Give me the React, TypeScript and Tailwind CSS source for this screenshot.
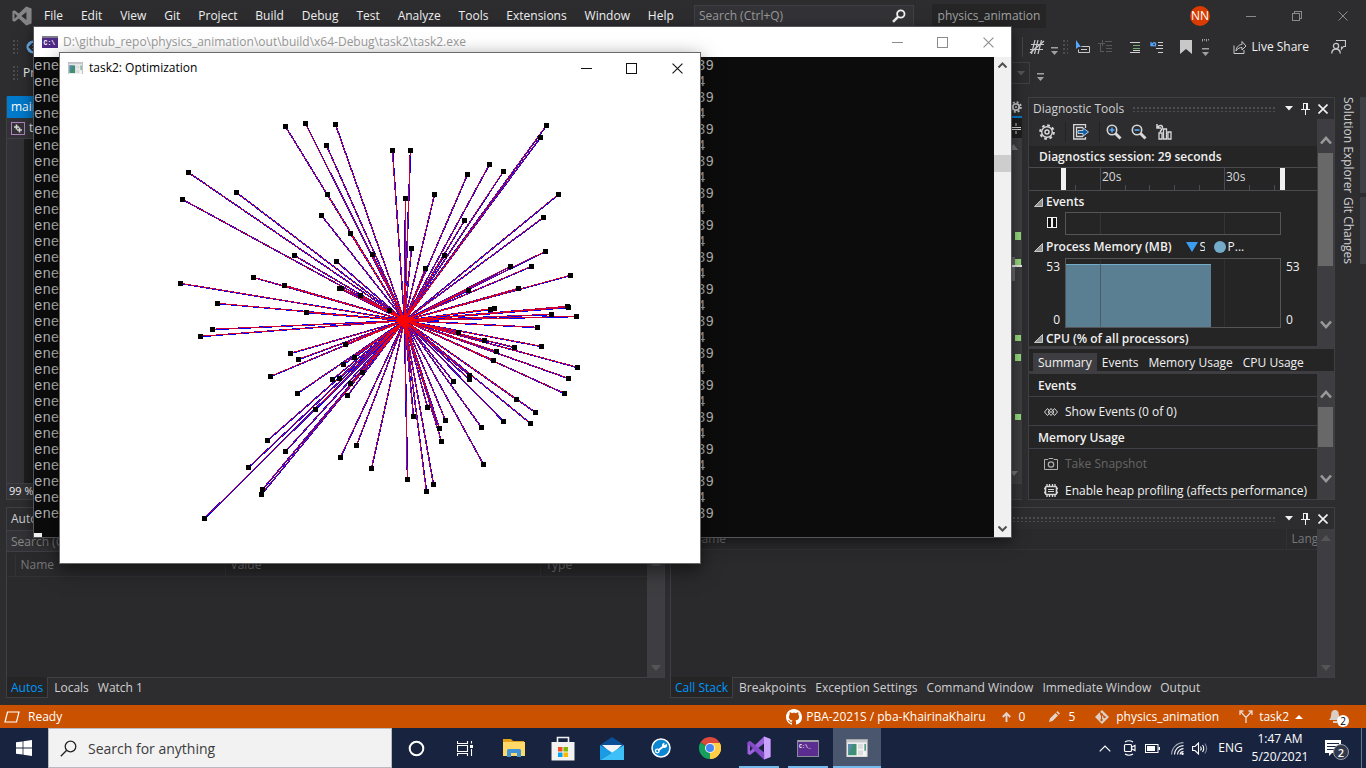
import React from "react";

const UI = "font-['Open_Sans','Noto_Sans',sans-serif]";

/* ---------- small shared pieces ---------- */

function Grip({ className }: { className: string }) {
  return (
    <div
      aria-hidden="true"
      className={`bg-[radial-gradient(#4c4c51_1px,transparent_1px)] bg-[length:4px_4px] ${className}`}
    />
  );
}

function VsLogo({ size, mono }: { size: number; mono?: boolean }) {
  return (
    <svg width={size} height={size} viewBox="0 0 24 24" aria-hidden="true">
      <path
        fillRule="evenodd"
        fill={mono ? "#858587" : "#9a63dd"}
        d="M17 0.5 L23.5 3 V21 L17 23.5 L8.2 15 L3 19 L0.5 17.8 V6.2 L3 5 L8.2 9 Z M17.3 7.2 L11.2 12 L17.3 16.8 Z M3 8.8 V15.2 L6.2 12 Z"
      />
      {!mono && <path fill="#c9a0fb" d="M17 0.5 L23.5 3 V21 L17 23.5 Z" />}
      {!mono && <path fill="#7a40bd" d="M3 5 L17.3 16.8 V23.4 L0.5 8 V6.2 Z" opacity="0.7" />}
    </svg>
  );
}

function Caret({ color = "#f1f1f1" }: { color?: string }) {
  return (
    <svg width="8" height="5" viewBox="0 0 8 5" aria-hidden="true">
      <path d="M0 0H8L4 4.5Z" fill={color} />
    </svg>
  );
}

function Overflow() {
  return (
    <svg width="7" height="8" viewBox="0 0 7 8" aria-hidden="true">
      <path d="M0 0H7V1.5H0Z M0 4H7L3.5 8Z" fill="#a0a0a3" />
    </svg>
  );
}

function Pin() {
  return (
    <svg width="9" height="12" viewBox="0 0 9 12" aria-hidden="true" shapeRendering="crispEdges">
      <path d="M2 0H7V6H9V7H5V12H4V7H0V6H2Z M3 1V6H5V1Z" fill="#f1f1f1" fillRule="evenodd" />
    </svg>
  );
}

function Cross({ size = 10, color = "#f1f1f1", width = 1.6 }: { size?: number; color?: string; width?: number }) {
  return (
    <svg width={size} height={size} viewBox="0 0 10 10" aria-hidden="true">
      <path d="M0.5 0.5L9.5 9.5M9.5 0.5L0.5 9.5" stroke={color} strokeWidth={width} fill="none" />
    </svg>
  );
}

function PanelControls() {
  return (
    <div className="flex items-center gap-2 pr-[6px]">
      <button aria-label="Window position"><Caret /></button>
      <button aria-label="Auto hide"><Pin /></button>
      <button aria-label="Close panel"><Cross /></button>
    </div>
  );
}

function Chevron({ up }: { up?: boolean }) {
  return (
    <svg width="12" height="9" viewBox="0 0 12 9" aria-hidden="true">
      <path d={up ? "M1 7.5L6 2L11 7.5" : "M1 1.5L6 7L11 1.5"} fill="none" stroke="#999999" strokeWidth="2.6" />
    </svg>
  );
}

function Triangle({ up }: { up?: boolean }) {
  return (
    <svg width="10" height="6" viewBox="0 0 10 6" aria-hidden="true">
      <path d={up ? "M0 6L5 0L10 6Z" : "M0 0L5 6L10 0Z"} fill="#555558" />
    </svg>
  );
}

function WindowButtons({ color }: { color: string }) {
  return (
    <div className="flex h-full">
      <button aria-label="Minimize" className="grid w-[46px] place-items-center">
        <svg width="11" height="11" viewBox="0 0 11 11" shapeRendering="crispEdges"><path d="M0 5.5H11" stroke={color} /></svg>
      </button>
      <button aria-label="Maximize" className="grid w-[45px] place-items-center">
        <svg width="11" height="11" viewBox="0 0 11 11" shapeRendering="crispEdges"><rect x="0.5" y="0.5" width="10" height="10" fill="none" stroke={color} /></svg>
      </button>
      <button aria-label="Close" className="grid w-[46px] place-items-center">
        <Cross size={11} color={color} width={1} />
      </button>
    </div>
  );
}

/* ---------- IDE top bars ---------- */

const MENUS = ["File", "Edit", "View", "Git", "Project", "Build", "Debug", "Test", "Analyze", "Tools", "Extensions", "Window", "Help"];

function MenuBar() {
  return (
    <header className="flex h-8 shrink-0 items-center pl-3">
      <VsLogo size={20} mono />
      <nav className="ml-3 flex w-[630px] shrink-0 justify-between text-[12px] text-[#f1f1f1]">
        {MENUS.map((m) => (
          <button key={m}>{m}</button>
        ))}
      </nav>
      <label className="ml-5 flex h-[22px] w-[220px] shrink-0 items-center border border-[#3f3f46] bg-[#333337] pl-1 pr-[7px]">
        <span className="sr-only">Search</span>
        <input placeholder="Search (Ctrl+Q)" className="min-w-0 flex-1 bg-transparent text-[12px] text-[#f1f1f1] outline-none placeholder:text-[#999999]" />
        <svg width="14" height="14" viewBox="0 0 14 14" aria-hidden="true">
          <circle cx="8.8" cy="5" r="3.7" fill="none" stroke="#f1f1f1" strokeWidth="1.8" />
          <path d="M6 7.8L1 12.8" stroke="#f1f1f1" strokeWidth="2.4" />
        </svg>
      </label>
      <div className="ml-[18px] flex h-6 w-[114px] items-center justify-center bg-[#252526] text-[12px] text-[#a0a0a0]">physics_animation</div>
      <div className="ml-auto flex items-center">
        <span className="grid size-5 place-items-center rounded-full bg-[#da3b01] text-[12px] text-white">NN</span>
        <div className="ml-[18px] flex h-8">
          <button aria-label="Minimize IDE" className="grid w-[46px] place-items-center">
            <svg width="10" height="10" viewBox="0 0 10 10" shapeRendering="crispEdges"><path d="M0 5.5H10" stroke="#8a8a8c" /></svg>
          </button>
          <button aria-label="Restore IDE" className="grid w-[46px] place-items-center">
            <svg width="10" height="10" viewBox="0 0 10 10" shapeRendering="crispEdges"><path d="M0.5 2.5H7.5V9.5H0.5ZM2.5 2.5V0.5H9.5V7.5H7.5" fill="none" stroke="#8a8a8c" /></svg>
          </button>
          <button aria-label="Close IDE" className="grid w-[46px] place-items-center"><Cross size={10} color="#8a8a8c" width={1} /></button>
        </div>
      </div>
    </header>
  );
}

function Divider() {
  return <span className="h-5 w-px bg-[#46464a]" />;
}

function Toolbars() {
  return (
    <div className="shrink-0 text-[12px] text-[#f1f1f1]">
      <div className="flex h-7 items-center pl-3 pt-[2px]">
        <Grip className="h-4 w-[6px]" />
        <button aria-label="Navigate backward" className="ml-2">
          <svg width="14" height="14" viewBox="0 0 14 14"><circle cx="7" cy="7" r="6.5" fill="#6cb2ee" /><path d="M11 7H4M7 3.5L3.5 7L7 10.5" stroke="#2d2d30" strokeWidth="1.8" fill="none" /></svg>
        </button>
        <div className="ml-auto flex items-center pr-5">
          <Divider />
          <button aria-label="Uncomment" className="ml-[6px]">
            <svg width="16" height="14" viewBox="0 0 16 14"><path d="M6 0L2.500 14M9 0L5.500 14M12.500 0L9 14M2 4.500H15M1 9.500H14" stroke="#c8c8c8" strokeWidth="1.200" fill="none" /><path d="M1 13L15 1" stroke="#c8c8c8" strokeWidth="1.400" /></svg>
          </button>
          <span className="ml-[6px] mt-2"><Overflow /></span>
          <Grip className="ml-1 h-4 w-[6px]" />
          <button aria-label="Select block" className="ml-[7px]">
            <svg width="15" height="15" viewBox="0 0 15 15"><path d="M1 0V9L3.5 7L6 7Z" fill="#55aaff" /><path d="M6.5 6.5H14.5V12.5H3.5V9.5M6 9.5H12" fill="none" stroke="#c8c8c8" /></svg>
          </button>
          <button aria-label="Outline" className="ml-2">
            <svg width="14" height="14" viewBox="0 0 14 14" shapeRendering="crispEdges"><path d="M0 3.5H7M2.5 3V11.5H6M7 1.5H14M8 5.5H14M8 8.5H14M8 11.5H14M4 0V6" stroke="#58585c" fill="none" strokeWidth="1" /></svg>
          </button>
          <span className="ml-2"><Divider /></span>
          <button aria-label="Comment lines" className="ml-[9px]">
            <svg width="12" height="11" viewBox="0 0 12 11" shapeRendering="crispEdges"><path d="M1 0.5H11M1 10.5H11" stroke="#d0d0d0" /><path d="M4 3.5H11M4 6.5H11" stroke="#6fae6f" /><path d="M4 8.5H11" stroke="#d0d0d0" /></svg>
          </button>
          <button aria-label="Undo comment" className="ml-[9px]">
            <svg width="14" height="13" viewBox="0 0 14 13"><path d="M1 1V4.5H4.5M1.5 4C4 0 7 2 5 5.5" stroke="#55aaff" strokeWidth="1.3" fill="none" /><path d="M8 1.5H13M8 4.5H13M6 7.5H13M8 11.5H13" stroke="#d0d0d0" /></svg>
          </button>
          <span className="ml-2"><Divider /></span>
          <button aria-label="Bookmark" className="ml-2">
            <svg width="12" height="14" viewBox="0 0 12 14"><path d="M0 0H12V14L6 9L0 14Z" fill="#c8c8c8" /></svg>
          </button>
          <svg className="ml-[10px]" width="7" height="18" viewBox="0 0 7 18" aria-hidden="true">
            <path d="M0.500 1V3.500M2.500 1V2.500M4.500 1V3.500M6.500 1V2.500" stroke="#a0a0a3" />
            <path d="M0 10H7V11.500H0Z M0 14H7L3.500 18Z" fill="#a0a0a3" />
          </svg>
          <button className="ml-6 flex items-center gap-[5px]">
            <svg width="14" height="14" viewBox="0 0 14 14"><path d="M1 5.5V13.5H11V10" stroke="#c8c8c8" fill="none" /><path d="M3 11C3.500 6 7 4.500 9 4.500V1.500L13 6L9 10V7.500C7 7.500 5 8 3 11Z" stroke="#c8c8c8" fill="none" /></svg>
            Live Share
          </button>
          <button aria-label="Send feedback" className="ml-[22px]">
            <svg width="15" height="14" viewBox="0 0 15 14"><path d="M5 0.500H14.500V6.500H12.500L10.500 9V6.500" fill="none" stroke="#c8c8c8" strokeWidth="1.2" /><circle cx="5" cy="6" r="2.600" fill="none" stroke="#c8c8c8" strokeWidth="1.300" /><path d="M0.700 13.500C1 10 3 9 5 9C7 9 9 10 9.300 13.500" fill="none" stroke="#c8c8c8" strokeWidth="1.300" /></svg>
          </button>
        </div>
      </div>
      <div className="flex h-[26px] items-center pl-3">
        <Grip className="h-4 w-[6px]" />
        <span className="ml-[5px]">Process:</span>
        <div className="ml-auto flex items-center gap-[7px] pr-[322px]">
          <button aria-label="Stack frame" className="flex h-[22px] w-[180px] items-center justify-end border border-[#3f3f46] pr-1"><Caret color="#55555a" /></button>
          <span className="mt-2"><Overflow /></span>
        </div>
      </div>
    </div>
  );
}

/* ---------- editor strip behind the windows ---------- */

function Editor() {
  return (
    <section className="flex min-w-0 flex-1 flex-col border-l border-[#3f3f46] text-[12px] text-[#f1f1f1]">
      <div className="flex h-[21px] shrink-0 items-center justify-between border-b-2 border-[#007acc]">
        <button className="h-[21px] bg-[#007acc] px-1 text-white">main.cpp</button>
        <svg width="12" height="12" viewBox="0 0 12 12" aria-hidden="true">
          <circle cx="6" cy="6" r="3.200" fill="none" stroke="#c8c8c8" strokeWidth="1.800" />
          <circle cx="6" cy="6" r="5" fill="none" stroke="#c8c8c8" strokeWidth="1.600" strokeDasharray="2 1.927" />
          <circle cx="6" cy="6" r="1" fill="#c8c8c8" />
        </svg>
      </div>
      <div className="flex h-[21px] shrink-0 items-center justify-between border-b border-[#3f3f46] bg-[#333337] pl-1">
        <span className="flex items-center gap-1">
          <svg width="14" height="13" viewBox="0 0 14 13"><rect x="0.500" y="0.500" width="13" height="12" fill="none" stroke="#b180c0" /><path d="M3 5H8M5.500 2.500V7.500M6 8H11M8.500 5.500V10.500" stroke="#d8d8d8" strokeWidth="1.600" /></svg>
          task2.exe
        </span>
        <span className="grid h-full w-3 place-items-center bg-[#1e1e1e]">
          <svg width="11" height="12" viewBox="0 0 11 12"><path d="M0 5.500H10M0 7.500H10M5 1V4M5 9V12" stroke="#d8d8d8" /></svg>
        </span>
      </div>
      <div className="flex min-h-0 flex-1">
        <div className="w-[17px] bg-[#333337]" />
        <div className="flex-1 bg-[#1e1e1e]" />
        <div className="w-[17px] bg-[#3e3e42]">
          <svg width="17" height="345" viewBox="0 0 17 345" aria-hidden="true">
            <path d="M4 11L8.500 5L13 11Z M5 332H13L9 337Z" fill="#777779" />
            <g fill="#95db7d">
              <rect x="10" y="93" width="6" height="8" /><rect x="10" y="120" width="6" height="7" /><rect x="10" y="196" width="6" height="6" /><rect x="10" y="215" width="6" height="7" /><rect x="10" y="275" width="6" height="6" />
            </g>
            <rect x="0" y="118" width="10" height="24" fill="#68686a" />
            <rect x="0" y="126" width="17" height="2" fill="#e8e8e8" />
          </svg>
        </div>
      </div>
      <div className="flex h-[17px] shrink-0 items-center border-y border-[#3f3f46] bg-[#333337] pl-[2px] text-[11px]">99 %</div>
    </section>
  );
}

/* ---------- diagnostic tools ---------- */

function Disclosure({ children }: { children: React.ReactNode }) {
  return (
    <button className="flex shrink-0 items-center gap-[3px] font-semibold">
      <svg width="9" height="9" viewBox="0 0 9 9" aria-hidden="true"><path d="M8.500 0.500V8.500H0.500Z" fill="#909090" stroke="#c8c8c8" /></svg>
      {children}
    </button>
  );
}

function Ruler() {
  return (
    <svg width="288" height="22" viewBox="0 0 288 22" shapeRendering="crispEdges" className="block">
      {[71, 195].map((x) => <path key={x} d={`M${x + 0.5} 0V22`} stroke="#4a4a4f" />)}
      {[46, 96, 120, 145, 170, 220, 245].map((x) => <path key={x} d={`M${x + 0.5} 17V22`} stroke="#4a4a4f" />)}
      {[32, 251].map((x) => <rect key={x} x={x} width="5" height="22" fill="#f1f1f1" />)}
      <text x="73" y="13" fontSize="12" fill="#d8d8d8">20s</text>
      <text x="197" y="13" fontSize="12" fill="#d8d8d8">30s</text>
    </svg>
  );
}

const iconStroke = "#d8d8d8";

function Diagnostics() {
  return (
    <aside className="flex w-[307px] shrink-0 flex-col overflow-hidden border border-[#3f3f46] bg-[#252526] text-[12px] text-[#f1f1f1]">
      <div className="flex h-[21px] shrink-0 items-center bg-[#2d2d30] pl-1">
        <h2 className="text-[#d0d0d0]">Diagnostic Tools</h2>
        <Grip className="mx-2 h-[6px] flex-1" />
        <PanelControls />
      </div>
      <div className="flex min-h-0 flex-1">
        <div className="flex min-w-0 flex-1 flex-col overflow-hidden">
          <div className="flex h-[27px] shrink-0 items-center bg-[#2d2d30] pb-[2px] pl-[10px]">
            <button aria-label="Settings">
              <svg width="16" height="16" viewBox="0 0 16 16"><circle cx="8" cy="8" r="5.300" fill="none" stroke={iconStroke} strokeWidth="1.400" /><circle cx="8" cy="8" r="6.800" fill="none" stroke={iconStroke} strokeWidth="2" strokeDasharray="2.700 2.640" /><circle cx="8" cy="8" r="2" fill="none" stroke={iconStroke} strokeWidth="1.500" /></svg>
            </button>
            <span className="ml-[10px] mr-[7px] h-5 w-px bg-[#222224]" />
            <button aria-label="Export">
              <svg width="16" height="16" viewBox="0 0 16 16"><path d="M12.500 4V0.700H0.700V15H12.500V13M10 3.500H3.500V12.500H10" fill="none" stroke={iconStroke} strokeWidth="1.300" /><path d="M5 6.500H10V3.800L15.500 8L10 12.200V9.500H5Z" fill="#0e5fa8" stroke="#e8e8e8" strokeWidth="0.800" /></svg>
            </button>
            <span className="ml-[10px] mr-[6px] h-5 w-px bg-[#222224]" />
            {["Zoom in", "Zoom out"].map((n) => (
              <button key={n} aria-label={n} className="mr-[9px]">
                <svg width="16" height="16" viewBox="0 0 16 16"><path d="M9 9L14.500 14.500" stroke={iconStroke} strokeWidth="3" /><circle cx="6" cy="6" r="4.700" fill="#2d2d30" stroke={iconStroke} strokeWidth="1.600" /><path d={n === "Zoom in" ? "M3.500 6H8.500M6 3.500V8.500" : "M3.500 6H8.500"} stroke="#55aaff" strokeWidth="1.600" /></svg>
              </button>
            ))}
            <button aria-label="Reset zoom">
              <svg width="16" height="16" viewBox="0 0 16 16"><path d="M1 0V4H5M1.500 4C3 0 8 1 6 5L4 8" fill="none" stroke={iconStroke} strokeWidth="1.500" /><path d="M3 9H6V15H3ZM7.500 5H10.500V15H7.500ZM12 8H15V15H12Z" fill="none" stroke={iconStroke} strokeWidth="1.300" /></svg>
            </button>
          </div>
          <div className="flex h-[21px] shrink-0 items-center pl-[10px] font-semibold">Diagnostics session: 29 seconds</div>
          <div className="shrink-0 border-y border-[#4a4a4f]"><Ruler /></div>
          <div className="flex h-[20px] shrink-0 items-center pl-[5px] pt-[2px]"><Disclosure>Events</Disclosure></div>
          <div className="flex h-[25px] shrink-0 items-center">
            <svg width="252" height="24" viewBox="0 0 252 24" shapeRendering="crispEdges">
              <rect x="18.500" y="5.500" width="9" height="10" fill="#111" stroke="#f1f1f1" /><path d="M23 5V16" stroke="#f1f1f1" strokeWidth="2" />
              <rect x="36.500" y="0.500" width="215" height="22" fill="none" stroke="#555558" />
              <path d="M71.500 1V22M195.500 1V22" stroke="#333338" />
            </svg>
          </div>
          <div className="flex h-[21px] shrink-0 items-center pl-[5px] pt-px">
            <Disclosure>Process Memory (MB)</Disclosure>
            <span className="ml-[14px] flex items-center gap-[2px]">
              <svg width="12" height="11" viewBox="0 0 12 11"><path d="M0 0H12L6 10Z" fill="#3a9df0" /></svg>
              <span className="w-[5px] overflow-hidden">S</span>
            </span>
            <span className="ml-[9px] flex items-center gap-[2px]">
              <svg width="12" height="12" viewBox="0 0 12 12"><circle cx="6" cy="6" r="6" fill="#74abc8" /></svg>
              P...
            </span>
          </div>
          <div className="flex h-[72px] shrink-0 pt-px">
            <div className="flex h-[70px] w-9 flex-col justify-between pr-[5px] pt-px text-right leading-4"><span>53</span><span>0</span></div>
            <svg width="216" height="70" viewBox="0 0 216 70" shapeRendering="crispEdges">
              <rect x="1" y="6" width="145" height="63" fill="#5b7f92" />
              <path d="M1 6.500H146" stroke="#74abc8" />
              <path d="M35.500 1V69M159.500 1V69" stroke="#3a3a44" strokeOpacity="0.500" />
              <rect x="0.500" y="0.500" width="215" height="69" fill="none" stroke="#555558" />
            </svg>
            <div className="flex h-[70px] flex-col justify-between pl-[5px] pt-px leading-4"><span>53</span><span>0</span></div>
          </div>
          <div className="flex h-[18px] shrink-0 items-center pl-[5px] pt-px"><Disclosure>CPU (% of all processors)</Disclosure></div>
        </div>
        <div className="flex w-[17px] flex-col items-center bg-[#3e3e42] pb-[17px] pt-[17px]">
          <Chevron up />
          <div className="mb-auto mt-[8px] h-[113px] w-[15px] bg-[#686868]" />
          <Chevron />
        </div>
      </div>
      <div className="flex h-[28px] shrink-0 items-end border-b-[3px] border-t-[3px] border-[#3e3e42] pl-1">
        {["Summary", "Events", "Memory Usage", "CPU Usage"].map((t, i) => (
          <button key={t} className={`h-[18px] px-[5px] leading-5 ${i === 0 ? "bg-[#3e3e42]" : ""}`}>{t}</button>
        ))}
      </div>
      <div className="flex h-[125px] shrink-0">
        <div className="flex min-w-0 flex-1 flex-col">
          <h3 className="flex h-[23px] shrink-0 items-center border-b border-[#3f3f46] pl-[9px] pt-px font-semibold">Events</h3>
          <button className="flex h-[29px] shrink-0 items-center gap-[7px] border-b border-[#3f3f46] pl-[15px] pt-px">
            <svg width="14" height="8" viewBox="0 0 14 8"><path d="M3.500 0.500L6.500 4L3.500 7.500L0.500 4ZM7 0.500L10 4L7 7.500L4 4ZM10.500 0.500L13.500 4L10.500 7.500L7.500 4Z" fill="none" stroke={iconStroke} /></svg>
            Show Events (0 of 0)
          </button>
          <h3 className="flex h-[23px] shrink-0 items-center border-b border-[#3f3f46] pl-[9px] pt-px font-semibold">Memory Usage</h3>
          <button disabled className="flex h-[29px] shrink-0 items-center gap-[7px] pl-[15px] pt-px text-[#656565]">
            <svg width="14" height="12" viewBox="0 0 14 12"><path d="M0.500 1.500H4L5 0.500H9L10 1.500H13.500V11.500H0.500Z" fill="none" stroke="#b0b0b0" /><circle cx="7" cy="6.500" r="2.700" fill="none" stroke="#b0b0b0" strokeWidth="1.200" /></svg>
            Take Snapshot
          </button>
          <button className="flex h-[21px] shrink-0 items-center gap-[7px] whitespace-nowrap pl-[15px] pt-1">
            <svg width="14" height="13" viewBox="0 0 14 13"><rect x="1.500" y="2.500" width="11" height="8" rx="1" fill="none" stroke={iconStroke} strokeWidth="1.600" /><path d="M3 0V2M5.500 0V2M8.500 0V2M11 0V2M3 11V13M5.500 11V13M8.500 11V13M11 11V13M0 4.500H2M0 8.500H2M12 4.500H14M12 8.500H14" stroke={iconStroke} strokeWidth="1.300" /><path d="M4 5.500H10M4 7.500H10" stroke={iconStroke} /></svg>
            Enable heap profiling (affects performance)
          </button>
        </div>
        <div className="flex w-[17px] flex-col items-center bg-[#3e3e42] pb-[16px] pt-[16px]">
          <Chevron up />
          <div className="mb-auto mt-[8px] h-10 w-[15px] bg-[#686868]" />
          <Chevron />
        </div>
      </div>
    </aside>
  );
}

/* ---------- bottom tool windows ---------- */

function BottomTabs({ tabs }: { tabs: string[] }) {
  return (
    <div className="flex h-[21px] shrink-0 text-[#d0d0d0]">
      {tabs.map((t, i) => (
        <button
          key={t}
          className={i === 0 ? "border-x border-b border-[#3f3f46] bg-[#252526] px-1 pt-px text-[#0097fb]" : "border-t border-[#3f3f46] pl-[6px] pr-[3px]"}
        >
          {t}
        </button>
      ))}
      <span className="flex-1 border-t border-[#3f3f46]" />
    </div>
  );
}

function AutosPanel() {
  return (
    <section className="flex w-[659px] shrink-0 flex-col">
      <div className="flex min-h-0 flex-1 flex-col border border-b-0 border-[#3f3f46] bg-[#2a2a2c]">
        <div className="flex h-[22px] shrink-0 items-center bg-[#2d2d30] pl-1 text-[#d0d0d0]">
          <h2>Autos</h2>
          <Grip className="mx-2 h-[6px] flex-1" />
          <PanelControls />
        </div>
        <div className="flex h-[22px] shrink-0 items-center border-y border-[#3f3f46] bg-[#2d2d30]">
          <input aria-label="Search autos" placeholder="Search (Ctrl+E)" className="h-full w-[200px] bg-[#333337] pl-1 text-[12px] outline-none placeholder:text-[#8a8a8a]" />
        </div>
        <div className="flex min-h-0 flex-1 pt-[2px]">
          <div className="flex-1">
            <table className="w-full table-fixed border-collapse text-left text-[#77777a]">
              <thead>
                <tr className="h-[22px] border-b border-[#323235]">
                  <th className="w-2 border-r border-[#323235]" aria-label="Marker" />
                  <th className="w-[210px] border-r border-[#323235] pl-[5px] font-normal">Name</th>
                  <th className="w-[315px] border-r border-[#323235] pl-[5px] font-normal">Value</th>
                  <th className="pl-[5px] font-normal">Type</th>
                </tr>
              </thead>
            </table>
          </div>
          <div className="flex w-[17px] flex-col items-center justify-between bg-[#3e3e42] py-[6px]"><Triangle up /><Triangle /></div>
        </div>
      </div>
      <BottomTabs tabs={["Autos", "Locals", "Watch 1"]} />
    </section>
  );
}

function CallStackPanel() {
  return (
    <section className="flex min-w-0 flex-1 flex-col">
      <div className="flex min-h-0 flex-1 flex-col border border-b-0 border-[#3f3f46] bg-[#2a2a2c]">
        <div className="flex h-[21px] shrink-0 items-center bg-[#2d2d30] pl-1 text-[#d0d0d0]">
          <h2>Call Stack</h2>
          <Grip className="mx-2 h-[6px] flex-1" />
          <PanelControls />
        </div>
        <div className="flex min-h-0 flex-1">
          <div className="min-w-0 flex-1">
            <table className="w-full table-fixed border-collapse text-left text-[#77777a]">
              <thead>
                <tr className="h-[20px] border-b border-[#323235]">
                  <th className="w-4 border-r border-[#323235]" aria-label="Marker" />
                  <th className="border-r border-[#323235] pl-[5px] font-normal">Name</th>
                  <th className="w-[31px] overflow-hidden pl-[5px] font-normal">Lang</th>
                </tr>
              </thead>
            </table>
          </div>
          <div className="flex w-[17px] flex-col items-center justify-between bg-[#3e3e42] py-[6px]"><Triangle up /><Triangle /></div>
        </div>
      </div>
      <BottomTabs tabs={["Call Stack", "Breakpoints", "Exception Settings", "Command Window", "Immediate Window", "Output"]} />
    </section>
  );
}

/* ---------- status bar ---------- */

function StatusBar() {
  return (
    <footer className="flex h-[23px] shrink-0 items-center bg-[#ca5100] pl-1 pr-[17px] text-[12px] text-white">
      <svg width="16" height="12" viewBox="0 0 16 12" aria-hidden="true"><path d="M3.500 1H15L12.500 11H1Z" fill="none" stroke="#fff" strokeWidth="1.200" /></svg>
      <span className="ml-2">Ready</span>
      <div className="ml-auto flex items-center">
        <button className="flex items-center gap-1">
          <svg width="16" height="16" viewBox="0 0 16 16" aria-hidden="true"><path fill="#fff" d="M8 0C3.580 0 0 3.580 0 8c0 3.540 2.290 6.530 5.470 7.590.4.070.550-.170.550-.380 0-.190-.010-.820-.010-1.490-2.010.370-2.530-.490-2.690-.940-.090-.230-.480-.940-.820-1.130-.280-.150-.680-.520-.010-.530.630-.010 1.080.580 1.230.820.720 1.210 1.870.870 2.330.660.070-.520.280-.870.510-1.070-1.780-.200-3.640-.890-3.640-3.950 0-.870.310-1.590.820-2.150-.080-.200-.360-1.020.080-2.120 0 0 .670-.210 2.200.820.640-.180 1.320-.270 2-.270s1.360.090 2 .270c1.530-1.040 2.200-.820 2.200-.820.440 1.100.160 1.920.080 2.120.510.560.820 1.270.820 2.150 0 3.070-1.870 3.750-3.650 3.950.290.250.540.730.540 1.480 0 1.070-.010 1.930-.010 2.200 0 .210.150.460.550.380A8.010 8.010 0 0 0 16 8c0-4.420-3.580-8-8-8z" /></svg>
          PBA-2021S / pba-KhairinaKhairu
        </button>
        <button className="ml-4 flex items-center gap-2">
          <svg width="9" height="10" viewBox="0 0 9 10" aria-hidden="true"><path d="M4.500 10V1.500M0.800 5L4.500 1.200L8.200 5" fill="none" stroke="#e4d5cc" strokeWidth="1.900" /></svg>
          0
        </button>
        <button className="ml-6 flex items-center gap-2">
          <svg width="11" height="11" viewBox="0 0 11 11" aria-hidden="true"><path d="M0 11L1 7.500L6.500 2L9 4.500L3.500 10ZM7.300 1.200L8.500 0L11 2.500L9.800 3.700Z" fill="#e4d5cc" /></svg>
          5
        </button>
        <button className="ml-5 flex items-center gap-[7px]">
          <svg width="14" height="14" viewBox="0 0 14 14" aria-hidden="true"><path d="M7 0L14 7L7 14L0 7Z" fill="#dccfc8" /><path d="M4.700 2.200L9.800 7.300M6.500 4.500V10" stroke="#ca5100" strokeWidth="1.100" /><circle cx="6.500" cy="4.300" r="1.200" fill="#ca5100" /><circle cx="9.500" cy="7" r="1.200" fill="#ca5100" /><circle cx="6.500" cy="10" r="1.200" fill="#ca5100" /></svg>
          physics_animation
        </button>
        <button className="ml-5 flex items-center gap-[6px]">
          <svg width="14" height="13" viewBox="0 0 14 13" aria-hidden="true"><path d="M7 13V7.500L1.500 1.500M7 7.500L12.500 1.500M1 5V1H4.500M9.500 1H13V5" fill="none" stroke="#e4d5cc" strokeWidth="1.400" /></svg>
          task2
          <svg width="8" height="4" viewBox="0 0 8 4" aria-hidden="true"><path d="M0 4L4 0L8 4Z" fill="#fff" /></svg>
        </button>
        <button aria-label="Notifications" className="relative ml-[26px] h-[18px] w-5">
          <svg width="12" height="14" viewBox="0 0 12 14" aria-hidden="true"><path d="M6 0C3 0 2.200 2.500 2.200 5L1.500 8L0 10H12L10.500 8L9.800 5C9.800 2.500 9 0 6 0ZM4 11H8V13H4Z" fill="#d8cdc7" /></svg>
          <span className="absolute -bottom-px right-0 grid size-3 place-items-center rounded-full bg-white text-[10px] leading-3 text-black">2</span>
        </button>
      </div>
    </footer>
  );
}

/* ---------- taskbar ---------- */

function AppIcon({ size }: { size: number }) {
  return (
    <svg width={size} height={size * 0.85} viewBox="0 0 22 19" aria-hidden="true">
      <rect x="0.500" y="0.500" width="21" height="18" fill="#f4f4f4" stroke="#a8a8a8" />
      <rect x="1" y="1" width="20" height="2.500" fill="#c4c8cc" />
      <rect x="2" y="5" width="8.500" height="11.500" fill="#3f8f72" />
      <path d="M2 5H7L2 16.500Z" fill="#5f86b8" opacity="0.800" />
      <rect x="12" y="5" width="5" height="5" fill="#dcdcdc" /><rect x="12" y="11.500" width="5" height="5" fill="#dcdcdc" />
      <rect x="18.500" y="5" width="1.600" height="7" fill="#4a9a86" />
    </svg>
  );
}

function TaskItem({ label, open, active, children }: { label: string; open?: boolean; active?: boolean; children: React.ReactNode }) {
  return (
    <button aria-label={label} className={`relative grid h-full w-12 place-items-center ${active ? "bg-[#4a566e]" : ""}`}>
      {children}
      {(open || active) && <span className={`absolute bottom-0 h-[2px] bg-[#76b9ed] ${active ? "inset-x-0" : "inset-x-1"}`} />}
    </button>
  );
}

function Taskbar() {
  return (
    <div className="flex h-10 shrink-0 items-stretch bg-[#18233f] text-white">
      <button aria-label="Start" className="grid w-12 place-items-center">
        <svg width="16" height="16" viewBox="0 0 16 16"><path d="M0 2.300L6.600 1.400V7.600H0ZM7.400 1.300L16 0V7.600H7.400ZM0 8.400H6.600V14.600L0 13.700ZM7.400 8.400H16V16L7.400 14.700Z" fill="#fff" /></svg>
      </button>
      <label className="flex w-[344px] items-center gap-[11px] border border-[#b8bac0] bg-[#f2f2f2] pl-[11px]">
        <span className="sr-only">Search Windows</span>
        <svg width="17" height="17" viewBox="0 0 17 17" aria-hidden="true"><circle cx="10.500" cy="6.500" r="5.300" fill="none" stroke="#222" strokeWidth="1.300" /><path d="M6.700 10.300L0.800 16.200" stroke="#222" strokeWidth="1.300" /></svg>
        <input placeholder="Search for anything" className="min-w-0 flex-1 bg-transparent text-[14px] text-[#333] outline-none placeholder:text-[#3c3c3c]" />
      </label>
      <div className="flex gap-px">
        <TaskItem label="Cortana"><svg width="17" height="17" viewBox="0 0 17 17"><circle cx="8.500" cy="8.500" r="6.800" fill="none" stroke="#fff" strokeWidth="2" /></svg></TaskItem>
        <TaskItem label="Task View">
          <svg width="16" height="15" viewBox="0 0 16 15"><path d="M0.500 0V2.500H10.500V0M0.500 4.500H10.500V10.500H0.500ZM0.500 15V12.500H10.500V15M14.500 0V2.500M14.500 8V15" fill="none" stroke="#fff" strokeWidth="1.100" /><rect x="13" y="4" width="3" height="3" fill="#fff" /></svg>
        </TaskItem>
        <TaskItem label="File Explorer">
          <svg width="22" height="18" viewBox="0 0 22 18"><path d="M0 0H8L10 2H21V6H0Z" fill="#e3a21a" /><path d="M0 3H22V17H0Z" fill="#ffd868" /><path d="M4 18V11.500Q4 10 5.500 10H16.500Q18 10 18 11.500V18H14V14H8V18Z" fill="#3f93d8" /></svg>
        </TaskItem>
        <TaskItem label="Microsoft Store">
          <svg width="24" height="25" viewBox="0 0 24 25"><path d="M6.500 7V1.500H17.500V7" fill="none" stroke="#f1f1f1" strokeWidth="1.600" /><rect x="0.500" y="6" width="23" height="18.500" fill="#f2f2f2" /><path d="M7 11H11.500V15.500H7Z" fill="#f25022" /><path d="M12.500 11H17V15.500H12.500Z" fill="#7fba00" /><path d="M7 16.500H11.500V21H7Z" fill="#00a4ef" /><path d="M12.500 16.500H17V21H12.500Z" fill="#ffb900" /></svg>
        </TaskItem>
        <TaskItem label="Mail">
          <svg width="24" height="23" viewBox="0 0 24 23"><path d="M0 8L12 0L24 8V15H0Z" fill="#0a4e96" /><path d="M2 8H22L12 17Z" fill="#f1f3f6" /><path d="M0 8L12 15.500L0 23Z" fill="#1a9be6" /><path d="M24 8L0 23H24Z" fill="#3cc0f7" /></svg>
        </TaskItem>
        <TaskItem label="Support Tool">
          <svg width="20" height="20" viewBox="0 0 20 20"><circle cx="10" cy="10" r="9" fill="#0a86d3" stroke="#fff" strokeWidth="1.500" /><path d="M7 12.500L13 8" stroke="#fff" strokeWidth="2" /><circle cx="6.300" cy="13" r="1.800" fill="none" stroke="#fff" strokeWidth="1.300" /><path d="M15.800 6A2.600 2.600 0 1 1 13.500 4.700L13.200 7.300Z" fill="#fff" /></svg>
        </TaskItem>
        <TaskItem label="Chrome">
          <svg width="22" height="22" viewBox="0 0 22 22"><path d="M11 11L1.470 5.500A11 11 0 0 1 20.530 5.500Z" fill="#db4a3c" /><path d="M11 11L20.530 5.500A11 11 0 0 1 11 22Z" fill="#ffce43" /><path d="M11 11L11 22A11 11 0 0 1 1.470 5.500Z" fill="#15a05d" /><path d="M11 6H20.800A11 11 0 0 1 11 22L15.400 13.500Z" fill="#ffce43" /><circle cx="11" cy="11" r="5" fill="#f1f1f1" /><circle cx="11" cy="11" r="4" fill="#4486f4" /></svg>
        </TaskItem>
        <TaskItem label="Visual Studio" open><VsLogo size={24} /></TaskItem>
        <TaskItem label="Console" open>
          <svg width="22" height="17" viewBox="0 0 22 17"><rect x="0.500" y="0.500" width="21" height="16" fill="#5c2d91" stroke="#8b8b94" /><rect x="1" y="0" width="20" height="2" fill="#a0a0a8" /><text x="2" y="8" fontSize="5" fontWeight="bold" fill="#fff" fontFamily="Liberation Mono, monospace">C:\_</text></svg>
        </TaskItem>
        <TaskItem label="task2" active><AppIcon size={22} /></TaskItem>
      </div>
      <div className="ml-auto flex items-center text-[12px]">
        <button aria-label="Hidden icons"><svg width="12" height="7" viewBox="0 0 12 7"><path d="M0.700 6.300L6 1L11.300 6.300" fill="none" stroke="#fff" strokeWidth="1.200" /></svg></button>
        <button aria-label="Meet now" className="ml-3"><svg width="13" height="16" viewBox="0 0 13 16"><rect x="1.500" y="4.500" width="7" height="7" rx="1" fill="none" stroke="#fff" strokeWidth="1.200" /><path d="M9 7L12 5.500V10.500L9 9M2 2Q6 -0.500 10 2M2 14Q6 16.500 10 14" fill="none" stroke="#fff" strokeWidth="1.100" /></svg></button>
        <button aria-label="Battery" className="ml-[9px]"><svg width="15" height="9" viewBox="0 0 15 9"><rect x="0.500" y="0.500" width="12.500" height="8" fill="none" stroke="#fff" /><rect x="2" y="2" width="8" height="5" fill="#fff" /><rect x="13.500" y="3" width="1.500" height="3" fill="#fff" /></svg></button>
        <button aria-label="Network" className="ml-[11px]"><svg width="13" height="13" viewBox="0 0 13 13"><g fill="none" stroke="#fff" strokeWidth="1.100"><path d="M0.600 12.500A12 12 0 0 1 12.500 0.600" opacity="0.600" /><path d="M3.500 12.500A9 9 0 0 1 12.500 3.600" /><path d="M6.500 12.500A6 6 0 0 1 12.500 6.600" /><path d="M9 12.500A3.500 3.500 0 0 1 12.500 9.500" /></g><circle cx="11.500" cy="11.800" r="1.200" fill="#fff" /></svg></button>
        <button aria-label="Volume" className="ml-2"><svg width="17" height="13" viewBox="0 0 17 13"><path d="M0.600 4.500H3L6.500 1V12L3 8.500H0.600Z" fill="none" stroke="#fff" strokeWidth="1.100" /><path d="M8.500 4.500Q10 6.500 8.500 8.500M10.500 3Q13 6.500 10.500 10" fill="none" stroke="#fff" strokeWidth="1.100" /><path d="M12.800 1.500Q16.500 6.500 12.800 11.500" fill="none" stroke="#7f879a" strokeWidth="1.100" /></svg></button>
        <button className="ml-[9px] w-[25px]">ENG</button>
        <button className="ml-[7px] w-[60px] whitespace-nowrap text-center text-[12px] leading-[18px]">1:47 AM<br />5/20/2021</button>
        <button aria-label="Action center" className="relative ml-[15px] mr-3 h-6 w-6">
          <svg width="16" height="16" viewBox="0 0 16 16"><path d="M0 0H16V13H7L4 16V13H0Z" fill="#fff" /><path d="M2 3.500H14M2 6.500H14M2 9.500H11" stroke="#18233f" strokeWidth="1.200" /></svg>
          <span className="absolute bottom-0 right-0 grid size-4 place-items-center rounded-full border border-[#9a9fac] bg-[#33394a] text-[11px] font-semibold leading-none">2</span>
        </button>
        <span className="mr-1 h-10 w-px bg-[#6c7488]" />
      </div>
    </div>
  );
}

/* ---------- console window ---------- */

function ConsoleWindow() {
  const lines = Array.from({ length: 29 }, (_, i) => (i % 2 === 0 ? "39" : "4"));
  return (
    <section className="absolute left-[33px] top-[26px] w-[979px] border border-[#55555a] bg-[#0c0c0c] shadow-[0_4px_14px_rgba(0,0,0,0.5)]">
      <div className="flex h-[30px] items-center bg-white pl-2 text-[12px] text-[#9a9a9a]">
        <svg width="16" height="12" viewBox="0 0 16 12" aria-hidden="true"><rect width="16" height="12" fill="#4f2a86" /><rect width="16" height="2" fill="#7c7c88" /><text x="1.500" y="9" fontSize="6.500" fontWeight="bold" fill="#fff" fontFamily="Liberation Mono, monospace">C:\</text></svg>
        <h2 className="ml-[5px] flex-1">D:\github_repo\physics_animation\out\build\x64-Debug\task2\task2.exe</h2>
        <WindowButtons color="#8c8c8c" />
      </div>
      <div className="flex h-[480px]">
        <div className="flex flex-1 flex-col pt-px font-['Liberation_Mono',monospace] text-[14px] leading-4 text-[#b4b4b4]">
          {lines.map((v, i) => (
            <div key={i} className="flex h-4">
              <span className="w-[663px]">ene</span>
              <span>{v}</span>
            </div>
          ))}
          <span className="mt-auto h-1 w-2 bg-[#f2f2f2]" />
        </div>
        <div className="flex w-[17px] flex-col items-center justify-between bg-[#f0f0f0] py-[5px]">
          <svg width="9" height="6" viewBox="0 0 9 6"><path d="M0.500 5.500L4.500 1.500L8.500 5.500" fill="none" stroke="#505050" strokeWidth="2" /></svg>
          <div className="mb-auto mt-[87px] h-[17px] w-full bg-[#cdcdcd]" />
          <svg width="9" height="6" viewBox="0 0 9 6"><path d="M0.500 0.500L4.500 4.500L8.500 0.500" fill="none" stroke="#505050" strokeWidth="2" /></svg>
        </div>
      </div>
    </section>
  );
}

/* ---------- simulation window ---------- */

const CENTER: [number, number] = [404, 320];

const NODES: [number, number][] = [
  [285, 126], [305, 123], [335, 124], [326, 145], [392, 150], [188, 172], [182, 199], [236, 192], [327, 194], [321, 215],
  [405, 198], [350, 233], [372, 254], [336, 261], [294, 255], [253, 277], [284, 285], [180, 283], [217, 303], [306, 312],
  [339, 288], [341, 288], [360, 295], [389, 310], [212, 329], [410, 150], [546, 125], [540, 137], [489, 164], [503, 171],
  [467, 174], [434, 194], [558, 194], [543, 217], [464, 220], [411, 248], [444, 255], [425, 268], [545, 251], [510, 266],
  [531, 266], [570, 275], [468, 290], [518, 288], [567, 306], [568, 307], [490, 309], [494, 308], [551, 314], [576, 316],
  [537, 327], [200, 336], [345, 344], [290, 353], [298, 359], [270, 376], [354, 357], [343, 364], [362, 372], [332, 379],
  [339, 378], [350, 383], [347, 395], [297, 393], [315, 409], [267, 440], [248, 467], [285, 451], [262, 489], [261, 494],
  [204, 518], [340, 457], [356, 445], [371, 468], [407, 479], [426, 491], [433, 484], [413, 416], [427, 407], [439, 428],
  [445, 420], [441, 441], [481, 427], [483, 464], [453, 381], [469, 375], [469, 379], [503, 421], [530, 423], [516, 399],
  [535, 412], [564, 393], [568, 378], [577, 367], [541, 346], [493, 360], [496, 351], [514, 347], [484, 340], [458, 332],
];

function SimulationWindow() {
  const [cx, cy] = CENTER;
  return (
    <section className="absolute left-[59px] top-[52px] w-[642px] border border-[#6a6a6a] bg-white shadow-[0_6px_18px_rgba(0,0,0,0.55)]">
      <div className="flex h-[30px] items-center pl-2 text-[12px] text-black">
        <AppIcon size={15} />
        <h2 className="ml-[6px] flex-1">task2: Optimization</h2>
        <WindowButtons color="#111111" />
      </div>
      <svg viewBox="60 83 640 480" className="block w-full" role="img" aria-label="Optimization result" shapeRendering="crispEdges">
        {NODES.map(([x, y], i) => (
          <path key={i} d={`M${x + 0.5} ${y + 0.5}L${cx + 0.5} ${cy + 0.5}`} stroke="#0000ff" strokeWidth="1.6" />
        ))}
        {NODES.map(([x, y], i) => (
          <path key={i} d={`M${x + 0.2} ${y + 0.2}L${cx + 0.8} ${cy + 0.8}`} stroke="#ff0000" strokeWidth="0.8" />
        ))}
        <circle cx={cx} cy={cy + 1} r="6" fill="#ff0000" />
        {NODES.map(([x, y], i) => (
          <rect key={i} x={x - 2} y={y - 2} width="5" height="5" fill="#000" />
        ))}
      </svg>
    </section>
  );
}

export default function App() {
  return (
    <div className={`relative flex h-screen min-h-[768px] flex-col overflow-hidden bg-[#2d2d30] ${UI}`}>
      <MenuBar />
      <Toolbars />
      <div className="flex min-h-0 flex-1 pb-[7px] pl-[6px] pt-[11px]">
        <div className="flex min-w-0 flex-1 flex-col gap-[7px]">
          <div className="flex min-h-0 flex-1 gap-[6px]">
            <Editor />
            <Diagnostics />
          </div>
          <div className="flex h-[191px] shrink-0 gap-[5px] text-[12px]">
            <AutosPanel />
            <CallStackPanel />
          </div>
        </div>
        <aside className="flex w-[31px] shrink-0 flex-col items-end gap-1 text-[12px] text-[#d0d0d0]">
          {["Solution Explorer", "Git Changes"].map((t) => (
            <button key={t} className="whitespace-nowrap border-r-[6px] border-[#3f3f46] pr-1 leading-4 [writing-mode:vertical-rl]">{t}</button>
          ))}
        </aside>
      </div>
      <StatusBar />
      <Taskbar />
      <ConsoleWindow />
      <SimulationWindow />
    </div>
  );
}
